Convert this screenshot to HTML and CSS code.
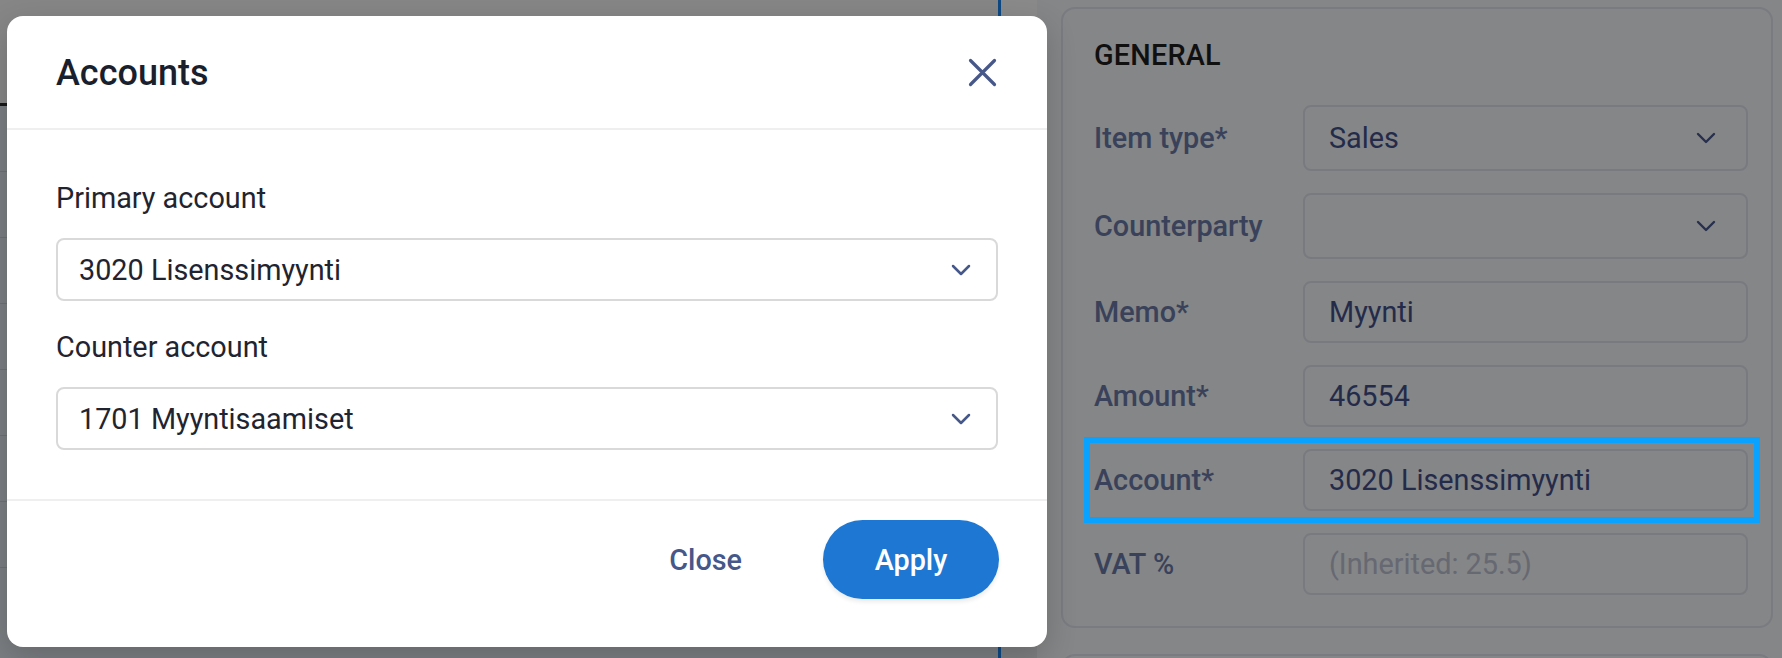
FILE: index.html
```html
<!DOCTYPE html>
<html lang="en">
<head>
<meta charset="utf-8">
<title>Accounts</title>
<link rel="stylesheet" href="styles.css">
</head>
<body>
<div class="page">
  <main class="table-area">
    <div class="table-head"></div>
    <div class="row"><div class="cell"></div><div class="cell"></div><div class="cell"></div><div class="cell"></div><div class="cell last"></div></div>
    <div class="row"><div class="cell"></div><div class="cell"></div><div class="cell"></div><div class="cell"></div><div class="cell last"></div></div>
    <div class="row"><div class="cell"></div><div class="cell"></div><div class="cell"></div><div class="cell"></div><div class="cell last"></div></div>
    <div class="row"><div class="cell"></div><div class="cell"></div><div class="cell"></div><div class="cell"></div><div class="cell last"></div></div>
    <div class="row"><div class="cell"></div><div class="cell"></div><div class="cell"></div><div class="cell"></div><div class="cell last"></div></div>
    <div class="row"><div class="cell"></div><div class="cell"></div><div class="cell"></div><div class="cell"></div><div class="cell last"></div></div>
    <div class="row"><div class="cell"></div><div class="cell"></div><div class="cell"></div><div class="cell"></div><div class="cell last"></div></div>
    <div class="row row-end"><div class="cell"></div><div class="cell"></div><div class="cell"></div><div class="cell"></div><div class="cell last"></div></div>
  </main>
  <div class="blue-rule"></div>
  <aside class="side">
    <div class="strip"></div>
    <div class="side-col">
      <section class="card">
        <h2 class="card-title">GENERAL</h2>
        <div class="form">
          <div class="f-label">Item type*</div>
          <div class="f-field f-select"><span>Sales</span>
            <svg class="chev-s" width="20" height="12" viewBox="0 0 20 12"><path d="M2 2 L10 10 L18 2" fill="none" stroke="currentColor" stroke-width="2.4" stroke-linecap="round" stroke-linejoin="round"/></svg>
          </div>
          <div class="f-label">Counterparty</div>
          <div class="f-field f-select"><span></span>
            <svg class="chev-s" width="20" height="12" viewBox="0 0 20 12"><path d="M2 2 L10 10 L18 2" fill="none" stroke="currentColor" stroke-width="2.4" stroke-linecap="round" stroke-linejoin="round"/></svg>
          </div>
          <div class="f-label">Memo*</div>
          <div class="f-field"><span>Myynti</span></div>
          <div class="f-label">Amount*</div>
          <div class="f-field"><span>46554</span></div>
          <div class="f-label">Account*</div>
          <div class="f-field"><span>3020 Lisenssimyynti</span></div>
          <div class="f-label">VAT %</div>
          <div class="f-field"><span class="placeholder">(Inherited: 25.5)</span></div>
        </div>
      </section>
      <section class="card card-next"></section>
    </div>
  </aside>
</div>

<div class="overlay"></div>
<div class="highlight"></div>

<div class="modal" role="dialog" aria-label="Accounts">
  <header class="modal-head">
    <h1 class="modal-title">Accounts</h1>
    <button class="icon-btn" aria-label="Close">
      <svg width="29" height="29" viewBox="0 0 29 29"><path d="M2.5 2.5 L26.5 26.5 M26.5 2.5 L2.5 26.5" fill="none" stroke="currentColor" stroke-width="3.2" stroke-linecap="round"/></svg>
    </button>
  </header>
  <div class="modal-body">
    <div class="group">
      <label class="m-label">Primary account</label>
      <div class="m-select"><span>3020 Lisenssimyynti</span>
        <svg width="20" height="12" viewBox="0 0 20 12"><path d="M2 2 L10 10 L18 2" fill="none" stroke="currentColor" stroke-width="2.5" stroke-linecap="round" stroke-linejoin="round"/></svg>
      </div>
    </div>
    <div class="group group-2">
      <label class="m-label">Counter account</label>
      <div class="m-select"><span>1701 Myyntisaamiset</span>
        <svg width="20" height="12" viewBox="0 0 20 12"><path d="M2 2 L10 10 L18 2" fill="none" stroke="currentColor" stroke-width="2.5" stroke-linecap="round" stroke-linejoin="round"/></svg>
      </div>
    </div>
  </div>
  <footer class="modal-foot">
    <button class="btn-text">Close</button>
    <button class="btn-primary">Apply</button>
  </footer>
</div>
</body>
</html>
```

FILE: styles.css
```css
* { box-sizing: border-box; }

html, body {
  margin: 0;
  padding: 0;
}

body {
  width: 1782px;
  height: 658px;
  overflow: hidden;
  font-family: Roboto, "Noto Sans", "Liberation Sans", sans-serif;
  background: #f6f7f9;
  position: relative;
}

/* ---------- underlying page ---------- */
.page {
  display: flex;
  height: 658px;
  overflow: hidden;
}

.table-area {
  width: 998px;
  flex: none;
  background: #e4e9f0;
  overflow: hidden;
}

.table-head {
  height: 106px;
  background: #f8f8f8;
  border-bottom: 3px solid #2e2e2e;
}

.row {
  display: flex;
  height: 66px;
  border-bottom: 1px solid #ccd1d9;
}

.row-end { height: 21px; border-bottom: none; }

.cell {
  width: 240px;
  flex: none;
  border-right: 1px solid #c7ccd4;
}

.cell:first-child { width: 234px; }
.cell.last { width: 44px; border-right: none; }

.blue-rule {
  width: 3px;
  flex: none;
  background: #1c86f0;
}

.side {
  flex: 1;
  display: flex;
  background: #f6f7f9;
}

.strip {
  width: 36px;
  flex: none;
  background: linear-gradient(#ffffff 0 22px, #e8eaee 22px);
}

.side-col {
  flex: 1;
  height: 658px;
  overflow: hidden;
  padding: 7px 9px 0 24px;
}

.card {
  border: 2px solid #e0e3ec;
  border-radius: 14px;
  padding: 29px 23px 31px 31px;
}

.card-next {
  margin-top: 26px;
  height: 40px;
}

.card-title {
  margin: 0 0 33px;
  font-size: 28.8px;
  line-height: 34px;
  font-weight: 500;
  color: #1e1e1e;
  letter-spacing: 0.2px;
}

.form {
  display: grid;
  grid-template-columns: 209px 1fr;
  row-gap: 22px;
  align-items: center;
}

.f-label {
  font-size: 28.8px;
  line-height: 34px;
  font-weight: 500;
  color: #6a7aa6;
}

.f-field {
  height: 62px;
  border: 2px solid #dfe2eb;
  border-radius: 8px;
  padding: 0 30px 0 24px;
  display: flex;
  align-items: center;
  justify-content: space-between;
  font-size: 28.8px;
  line-height: 34px;
  color: #44518a;
}

.f-select { height: 66px; }

.chev-s { color: #4a5790; flex: none; }

.placeholder { color: #bcc1d3; }

/* ---------- overlay + annotation ---------- */
.overlay {
  position: absolute;
  inset: 0;
  background: rgba(0, 0, 0, 0.46);
}

.highlight {
  position: absolute;
  left: 1084px;
  top: 437px;
  width: 676px;
  height: 86px;
  border: 6px solid #0aa2ff;
}

/* ---------- modal ---------- */
.modal {
  position: absolute;
  left: 7px;
  top: 16px;
  width: 1040px;
  height: 631px;
  background: #ffffff;
  border-radius: 16px;
  box-shadow: 0 10px 30px rgba(0, 0, 0, 0.18);
  display: flex;
  flex-direction: column;
  color: #1d2230;
}

.modal-head {
  height: 114px;
  flex: none;
  display: flex;
  align-items: center;
  justify-content: space-between;
  padding: 2px 49px 0 49px;
  border-bottom: 2px solid #efefef;
}

.modal-title {
  margin: 0;
  font-size: 36px;
  line-height: 42px;
  font-weight: 500;
  color: #1a1f2e;
}

.icon-btn {
  border: 0;
  background: none;
  padding: 0;
  margin: -2px 1px 0 0;
  width: 29px;
  height: 29px;
  color: #46578a;
  display: flex;
}

.modal-body {
  padding: 51px 49px 49px;
}

.group { display: flex; flex-direction: column; }
.group-2 { margin-top: 29px; }

.m-label {
  font-size: 28.8px;
  line-height: 34px;
  color: #1f2430;
  margin-bottom: 23px;
}

.m-select {
  height: 63px;
  border: 2px solid #d9d9d9;
  border-radius: 8px;
  padding: 0 25px 0 21px;
  display: flex;
  align-items: center;
  justify-content: space-between;
  font-size: 28.8px;
  line-height: 34px;
  color: #1f2430;
}

.m-select svg { color: #46578a; flex: none; }

.modal-foot {
  flex: 1;
  border-top: 2px solid #efefef;
  display: flex;
  justify-content: flex-end;
  align-items: flex-start;
  gap: 41px;
  padding: 19px 48px 0 0;
}

.btn-text {
  height: 79px;
  border: 0;
  background: none;
  padding: 0 40px;
  font-family: inherit;
  font-size: 28.8px;
  font-weight: 500;
  color: #46578a;
}

.btn-primary {
  width: 176px;
  height: 79px;
  border: 0;
  border-radius: 40px;
  background: #1e77d2;
  color: #ffffff;
  font-family: inherit;
  font-size: 28.8px;
  font-weight: 500;
  box-shadow: 0 3px 4px rgba(0, 0, 0, 0.08);
}
```
